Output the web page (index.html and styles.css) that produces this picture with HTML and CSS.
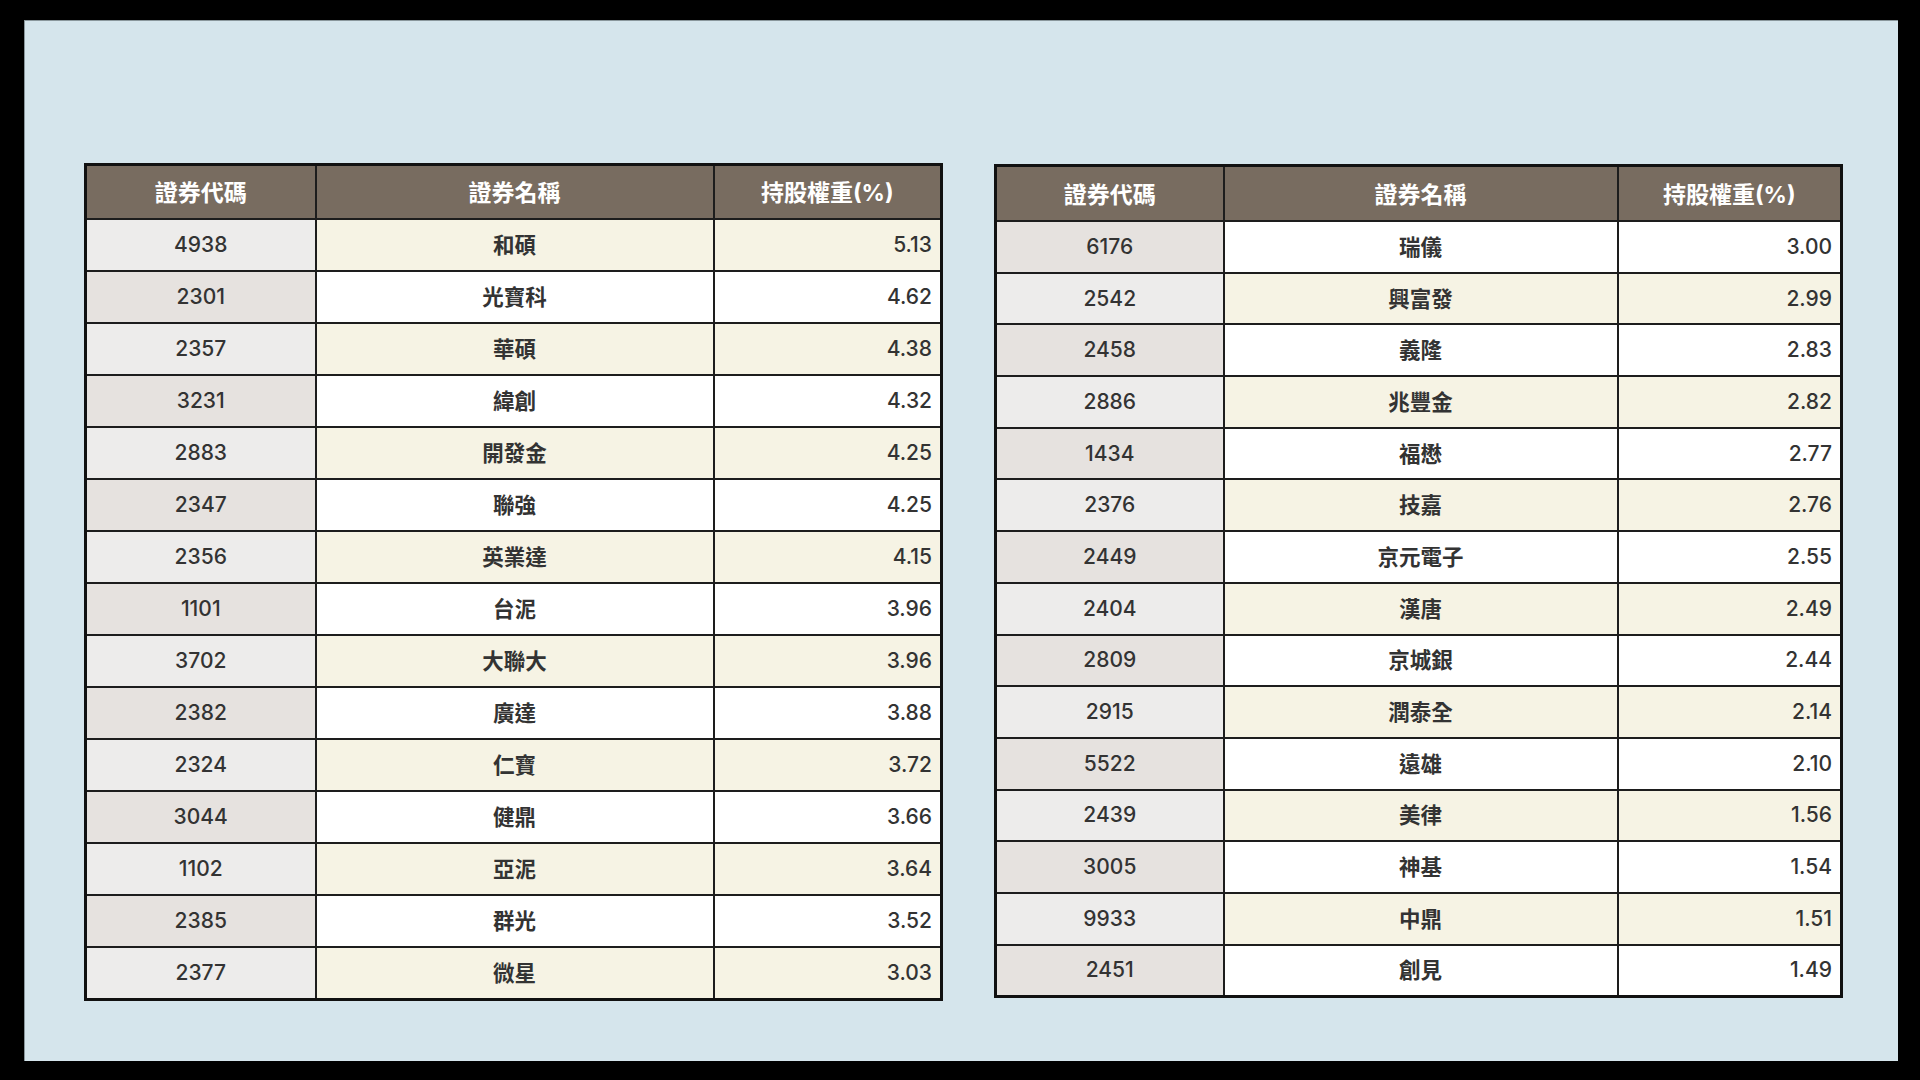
FILE: index.html
```html
<!DOCTYPE html>
<html lang="zh-Hant">
<head>
<meta charset="utf-8">
<title>持股權重</title>
<link rel="stylesheet" href="styles.css">
</head>
<body>
<div class="panel">
  <table class="holdings holdings-left">
    <colgroup><col class="c1"><col class="c2"><col class="c3"></colgroup>
    <thead><tr><th>證券代碼</th><th>證券名稱</th><th>持股權重(%)</th></tr></thead>
    <tbody>
      <tr class="odd"><td>4938</td><td class="name">和碩</td><td class="num">5.13</td></tr>
      <tr class="even"><td>2301</td><td class="name">光寶科</td><td class="num">4.62</td></tr>
      <tr class="odd"><td>2357</td><td class="name">華碩</td><td class="num">4.38</td></tr>
      <tr class="even"><td>3231</td><td class="name">緯創</td><td class="num">4.32</td></tr>
      <tr class="odd"><td>2883</td><td class="name">開發金</td><td class="num">4.25</td></tr>
      <tr class="even"><td>2347</td><td class="name">聯強</td><td class="num">4.25</td></tr>
      <tr class="odd"><td>2356</td><td class="name">英業達</td><td class="num">4.15</td></tr>
      <tr class="even"><td>1101</td><td class="name">台泥</td><td class="num">3.96</td></tr>
      <tr class="odd"><td>3702</td><td class="name">大聯大</td><td class="num">3.96</td></tr>
      <tr class="even"><td>2382</td><td class="name">廣達</td><td class="num">3.88</td></tr>
      <tr class="odd"><td>2324</td><td class="name">仁寶</td><td class="num">3.72</td></tr>
      <tr class="even"><td>3044</td><td class="name">健鼎</td><td class="num">3.66</td></tr>
      <tr class="odd"><td>1102</td><td class="name">亞泥</td><td class="num">3.64</td></tr>
      <tr class="even"><td>2385</td><td class="name">群光</td><td class="num">3.52</td></tr>
      <tr class="odd"><td>2377</td><td class="name">微星</td><td class="num">3.03</td></tr>
    </tbody>
  </table>
  <table class="holdings holdings-right">
    <colgroup><col class="c1"><col class="c2"><col class="c3"></colgroup>
    <thead><tr><th>證券代碼</th><th>證券名稱</th><th>持股權重(%)</th></tr></thead>
    <tbody>
      <tr class="even"><td>6176</td><td class="name">瑞儀</td><td class="num">3.00</td></tr>
      <tr class="odd"><td>2542</td><td class="name">興富發</td><td class="num">2.99</td></tr>
      <tr class="even"><td>2458</td><td class="name">義隆</td><td class="num">2.83</td></tr>
      <tr class="odd"><td>2886</td><td class="name">兆豐金</td><td class="num">2.82</td></tr>
      <tr class="even"><td>1434</td><td class="name">福懋</td><td class="num">2.77</td></tr>
      <tr class="odd"><td>2376</td><td class="name">技嘉</td><td class="num">2.76</td></tr>
      <tr class="even"><td>2449</td><td class="name">京元電子</td><td class="num">2.55</td></tr>
      <tr class="odd"><td>2404</td><td class="name">漢唐</td><td class="num">2.49</td></tr>
      <tr class="even"><td>2809</td><td class="name">京城銀</td><td class="num">2.44</td></tr>
      <tr class="odd"><td>2915</td><td class="name">潤泰全</td><td class="num">2.14</td></tr>
      <tr class="even"><td>5522</td><td class="name">遠雄</td><td class="num">2.10</td></tr>
      <tr class="odd"><td>2439</td><td class="name">美律</td><td class="num">1.56</td></tr>
      <tr class="even"><td>3005</td><td class="name">神基</td><td class="num">1.54</td></tr>
      <tr class="odd"><td>9933</td><td class="name">中鼎</td><td class="num">1.51</td></tr>
      <tr class="even"><td>2451</td><td class="name">創見</td><td class="num">1.49</td></tr>
    </tbody>
  </table>
</div>
</body>
</html>
```
FILE: styles.css
```css
html, body {
  margin: 0;
  padding: 0;
  background: #000;
}
body {
  width: 1920px;
  height: 1080px;
  overflow: hidden;
  font-family: Inter, "Noto Sans CJK TC", sans-serif;
}
.panel {
  box-sizing: border-box;
  margin: 20px 22px 0 24px;
  width: 1874px;
  height: 1041px;
  background: #d5e5ec;
  border-top: 1px solid #8a979c;
  border-left: 1px solid #8a979c;
  padding: 142px 0 0 59px;
  display: flex;
  align-items: flex-start;
  gap: 51px;
}
.holdings {
  border-collapse: collapse;
  table-layout: fixed;
  border: 3px solid #111;
  color: #333;
}
.holdings th,
.holdings td {
  border: 2px solid #1d1d1d;
  padding: 0;
  text-align: center;
  vertical-align: middle;
  line-height: 24px;
}
.holdings th {
  background: #786c60;
  color: #fff;
  font-size: 23px;
  font-weight: 700;
  height: 50px;
  padding-top: 2px;
}
.holdings td {
  font-size: 21px;
  font-weight: 500;
  height: 50px;
}
.holdings td.name {
  font-size: 21.5px;
  font-weight: 600;
}
.holdings td.num {
  text-align: right;
  padding-right: 8px;
}
.holdings-left { width: 856px; }
.holdings-left .c1 { width: 230px; }
.holdings-left .c2 { width: 398px; }
.holdings-left .c3 { width: 228px; }
.holdings-right { width: 846px; margin-top: 1px; }
.holdings-right .c1 { width: 228px; }
.holdings-right .c2 { width: 394px; }
.holdings-right .c3 { width: 224px; }
.holdings-right th { height: 51px; }
.holdings-right td { height: 49.7px; }
.odd td { background: #f6f3e4; }
.odd td:first-child { background: #edeceb; }
.even td { background: #fff; }
.even td:first-child { background: #e6e2df; }
```
